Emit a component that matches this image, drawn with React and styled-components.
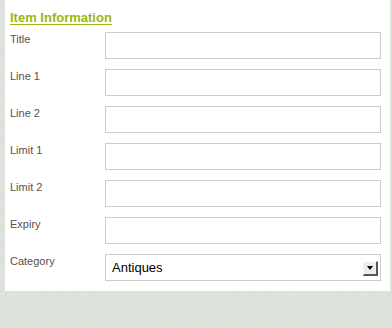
import React from "react";
import styled, { createGlobalStyle } from "styled-components";

const Global = createGlobalStyle`
  html, body { margin: 0; padding: 0; }
  body {
    width: 392px;
    height: 328px;
    overflow: hidden;
    background-color: #dde2dc;
    background-image: repeating-linear-gradient(
      135deg,
      #dfe4de 0px,
      #dfe4de 2px,
      #d9ded7 2px,
      #d9ded7 3px
    );
    font-family: "Liberation Sans", Arial, sans-serif;
  }
`;

const Panel = styled.div`
  margin-left: 5px;
  width: 385px;
  height: 291px;
  background: #ffffff;
  box-sizing: border-box;
  padding: 10px 0 0 5px;
`;

const Heading = styled.h2`
  margin: 0 0 7px 0;
  font-size: 13px;
  line-height: 15px;
  font-weight: bold;
  color: #9bb80c;
  text-decoration: underline;
  text-underline-offset: 2px;
`;

const Form = styled.div`
  display: flex;
  flex-direction: column;
  gap: 10px;
`;

const Row = styled.div`
  display: flex;
  align-items: flex-start;
`;

const Label = styled.label`
  width: 95px;
  flex: none;
  font-size: 11px;
  line-height: 13px;
  padding-top: 1px;
  color: #5e5047;
`;

const Field = styled.div`
  width: 276px;
  height: 27px;
  box-sizing: border-box;
  border: 1px solid #cccccc;
  background: #ffffff;
`;

const Select = styled(Field)`
  display: flex;
  align-items: center;
  justify-content: space-between;
  padding: 0 2px 0 6px;
  font-size: 13px;
  color: #000;
`;

const DropButton = styled.span`
  width: 15px;
  height: 15px;
  box-sizing: border-box;
  margin-top: 1px;
  background: #ececec;
  border-style: solid;
  border-width: 1px 2px 2px 1px;
  border-color: #ffffff #555555 #555555 #f4f4f4;
  display: flex;
  align-items: center;
  justify-content: center;
  &::after {
    content: "";
    width: 0;
    height: 0;
    border-left: 3px solid transparent;
    border-right: 3px solid transparent;
    border-top: 4px solid #000;
  }
`;

const fields = ["Title", "Line 1", "Line 2", "Limit 1", "Limit 2", "Expiry"];

export default function App() {
  return (
    <>
      <Global />
      <Panel>
        <Heading>Item Information</Heading>
        <Form>
          {fields.map((f) => (
            <Row key={f}>
              <Label>{f}</Label>
              <Field />
            </Row>
          ))}
          <Row>
            <Label>Category</Label>
            <Select>
              <span>Antiques</span>
              <DropButton />
            </Select>
          </Row>
        </Form>
      </Panel>
    </>
  );
}
